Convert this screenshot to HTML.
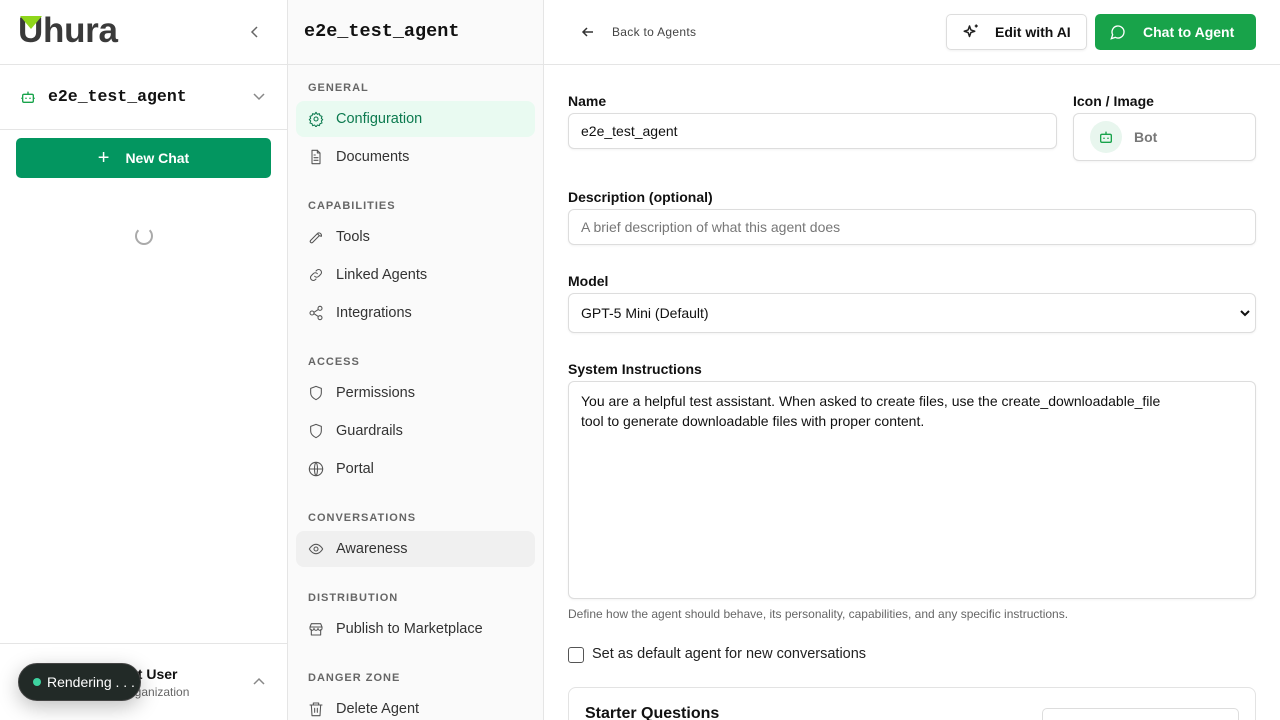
<!DOCTYPE html>
<html><head><meta charset="utf-8"><style>
*{box-sizing:border-box;margin:0;padding:0}
html,body{width:1280px;height:720px;overflow:hidden}
body{font-family:"Liberation Sans",sans-serif;background:#fff;color:#111;position:relative}
.sb{position:absolute;left:0;top:0;width:288px;height:720px;border-right:1px solid #e5e5e5;background:#fff;overflow:hidden}
.mid{position:absolute;left:288px;top:0;width:256px;height:720px;border-right:1px solid #e5e5e5;background:#fafafa;overflow:hidden}
.main{position:absolute;left:544px;top:0;width:736px;height:720px;overflow:hidden}
.hline{position:absolute;left:0;right:0;height:1px;background:#e5e5e5}
.sec{position:absolute;left:20px;font-size:11px;font-weight:bold;letter-spacing:1px;color:#666;margin-top:1px}
.item{position:absolute;left:8px;width:239px;height:36px;border-radius:8px;display:flex;align-items:center;padding-left:12px;font-size:14.5px;color:#333}
.item svg{width:16px;height:16px;margin-right:12px;fill:none;stroke:#555;stroke-width:1.6;stroke-linecap:round;stroke-linejoin:round}
.lbl{position:absolute;font-size:14px;font-weight:bold;color:#111}
.inp{position:absolute;border:1px solid #ddd;border-radius:6px;background:#fff;box-shadow:0 1px 2px rgba(0,0,0,.05);font-size:14px;display:flex;align-items:center;padding-left:12px}
</style></head><body>
<div class="sb">
  <div style="position:absolute;left:18px;top:14px;font-size:35px;font-weight:bold;color:#3a3a3a;letter-spacing:-0.3px;line-height:34px">U<span>hura</span></div>
  <div style="position:absolute;left:20px;top:16px;width:22px;height:13px;background:#8fd61b;clip-path:polygon(0 0,100% 0,50% 100%)"></div>
  <svg style="position:absolute;left:249px;top:25px" width="12" height="14" viewBox="0 0 12 14"><path d="M8 2L3 7l5 5" stroke="#666" stroke-width="1.5" fill="none"/></svg>
  <div class="hline" style="top:64px"></div>
  <svg style="position:absolute;left:20px;top:89px" width="16" height="16" viewBox="0 0 24 24" fill="none" stroke="#17a34a" stroke-width="2"><rect x="4" y="8" width="16" height="12" rx="2"/><path d="M12 8V4M9 13v2M15 13v2M2 14h2M20 14h2"/></svg>
  <div style="position:absolute;left:48px;top:87px;font-family:'Liberation Mono',monospace;font-weight:bold;font-size:16.5px">e2e_test_agent</div>
  <svg style="position:absolute;left:252px;top:91px" width="14" height="12" viewBox="0 0 14 12"><path d="M2 3l5 5 5-5" stroke="#888" stroke-width="1.5" fill="none"/></svg>
  <div class="hline" style="top:129px"></div>
  <div style="position:absolute;left:16px;top:138px;width:255px;height:40px;background:#039660;border-radius:5px;color:#fff;font-size:14px;font-weight:bold;display:flex;align-items:center;justify-content:center"><span style="font-size:20px;font-weight:normal;margin-right:16px">+</span>New Chat</div>
  <div style="position:absolute;left:135px;top:227px;width:18px;height:18px;border:2px solid #aaa;border-top-color:transparent;border-radius:50%"></div>
  <div class="hline" style="top:643px"></div>
  <div style="position:absolute;left:130px;top:666px;font-size:14px;font-weight:bold">st User</div>
  <div style="position:absolute;left:124px;top:685px;font-size:12px;color:#666">organization</div>
  <svg style="position:absolute;left:252px;top:676px" width="14" height="12" viewBox="0 0 14 12"><path d="M2 8l5-5 5 5" stroke="#888" stroke-width="1.5" fill="none"/></svg>
  <div style="position:absolute;left:18px;top:663px;width:123px;height:38px;border-radius:19px;background:#222a27;border:1px solid #444;box-shadow:0 6px 20px rgba(0,0,0,.25);color:#fff;font-size:14px;display:flex;align-items:center;padding-left:14px;white-space:nowrap;overflow:hidden"><span style="width:8px;height:8px;border-radius:50%;background:#3ed3a0;margin-right:6px;flex:none"></span>Rendering . . .</div>
</div>
<div class="mid">
  <div style="position:absolute;left:16px;top:21px;font-family:'Liberation Mono',monospace;font-weight:bold;font-size:18.5px">e2e_test_agent</div>
  <div class="hline" style="top:64px"></div>
  <div class="sec" style="top:81px">GENERAL</div>
  <div class="item" style="top:101px;background:#e9faf1;color:#0c7a4f"><svg viewBox="0 0 24 24" style="stroke:#0c7a4f"><circle cx="12" cy="12" r="3"/><path d="M12 2l2 3 3-1 1 3 3 1-1 3 2 2-2 2 1 3-3 1-1 3-3-1-2 3-2-3-3 1-1-3-3-1 1-3-2-2 2-2-1-3 3-1 1-3 3 1z"/></svg>Configuration</div>
  <div class="item" style="top:139px"><svg viewBox="0 0 24 24"><path d="M14 2H6v20h12V6z"/><path d="M14 2v4h4M9 13h6M9 17h6M9 9h2"/></svg>Documents</div>
  <div class="sec" style="top:199px">CAPABILITIES</div>
  <div class="item" style="top:219px"><svg viewBox="0 0 24 24"><path d="M15 6a4 4 0 0 1 5 5l-3-1-2-2zM14 7L4 17a2 2 0 0 0 3 3l10-10"/></svg>Tools</div>
  <div class="item" style="top:257px"><svg viewBox="0 0 24 24"><path d="M10 14a4 4 0 0 0 6 0l3-3a4 4 0 0 0-6-6l-1 1M14 10a4 4 0 0 0-6 0l-3 3a4 4 0 0 0 6 6l1-1"/></svg>Linked Agents</div>
  <div class="item" style="top:295px"><svg viewBox="0 0 24 24"><circle cx="18" cy="5" r="3"/><circle cx="6" cy="12" r="3"/><circle cx="18" cy="19" r="3"/><path d="M9 11l6-4M9 13l6 4"/></svg>Integrations</div>
  <div class="sec" style="top:355px">ACCESS</div>
  <div class="item" style="top:375px"><svg viewBox="0 0 24 24"><path d="M12 2l8 3v7c0 5-4 8-8 10-4-2-8-5-8-10V5z"/></svg>Permissions</div>
  <div class="item" style="top:413px"><svg viewBox="0 0 24 24"><path d="M12 2l8 3v7c0 5-4 8-8 10-4-2-8-5-8-10V5z"/></svg>Guardrails</div>
  <div class="item" style="top:451px"><svg viewBox="0 0 24 24"><circle cx="12" cy="12" r="10"/><path d="M2 12h20M12 2c3 3 3 17 0 20M12 2c-3 3-3 17 0 20"/></svg>Portal</div>
  <div class="sec" style="top:511px">CONVERSATIONS</div>
  <div class="item" style="top:531px;background:#f0f0f0"><svg viewBox="0 0 24 24"><path d="M2 12s4-7 10-7 10 7 10 7-4 7-10 7S2 12 2 12z"/><circle cx="12" cy="12" r="3"/></svg>Awareness</div>
  <div class="sec" style="top:591px">DISTRIBUTION</div>
  <div class="item" style="top:611px"><svg viewBox="0 0 24 24"><path d="M3 9l2-5h14l2 5M3 9h18v2a3 3 0 0 1-6 0 3 3 0 0 1-6 0 3 3 0 0 1-6 0zM5 13v8h14v-8"/></svg>Publish to Marketplace</div>
  <div class="sec" style="top:671px">DANGER ZONE</div>
  <div class="item" style="top:691px"><svg viewBox="0 0 24 24"><path d="M3 6h18M8 6V3h8v3M5 6l1 16h12l1-16M10 11v6M14 11v6"/></svg>Delete Agent</div>
</div>
<div class="main">
  <svg style="position:absolute;left:37px;top:25px" width="14" height="14" viewBox="0 0 14 14"><path d="M12 7H2M6 3L2 7l4 4" stroke="#333" stroke-width="1.5" fill="none"/></svg>
  <div style="position:absolute;left:68px;top:25px;font-size:12px;color:#444;letter-spacing:0.3px">Back to Agents</div>
  <div style="position:absolute;left:402px;top:14px;width:141px;height:36px;border:1px solid #ddd;border-radius:5px;box-shadow:0 1px 2px rgba(0,0,0,.06);font-size:14px;font-weight:bold;display:flex;align-items:center;padding-left:48px">Edit with AI</div>
  <svg style="position:absolute;left:418px;top:23px" width="18" height="18" viewBox="0 0 24 24" fill="none" stroke="#222" stroke-width="2" stroke-linejoin="round"><path d="M10 4l1.8 5.2L17 11l-5.2 1.8L10 18l-1.8-5.2L3 11l5.2-1.8z"/><path d="M19 2v4M17 4h4"/></svg>
  <div style="position:absolute;left:551px;top:14px;width:161px;height:36px;background:#18a34a;border-radius:5px;color:#fff;font-size:14px;font-weight:bold;display:flex;align-items:center;padding-left:48px">Chat to Agent</div>
  <svg style="position:absolute;left:566px;top:24px" width="16" height="16" viewBox="0 0 24 24" fill="none" stroke="#fff" stroke-width="2"><path d="M7.9 20A9 9 0 1 0 4 16.1L2 22z"/></svg>
  <div class="hline" style="top:64px"></div>
  <div class="lbl" style="left:24px;top:93px">Name</div>
  <div class="inp" style="left:24px;top:113px;width:489px;height:36px">e2e_test_agent</div>
  <div class="lbl" style="left:529px;top:93px">Icon / Image</div>
  <div class="inp" style="left:529px;top:113px;width:183px;height:48px;padding-left:16px;color:#777;font-weight:bold"><span style="width:32px;height:32px;border-radius:50%;background:#e8f6ee;display:inline-flex;align-items:center;justify-content:center;margin-right:12px"><svg width="16" height="16" viewBox="0 0 24 24" fill="none" stroke="#17a34a" stroke-width="2"><rect x="4" y="8" width="16" height="12" rx="2"/><path d="M12 8V4M9 13v2M15 13v2"/></svg></span>Bot</div>
  <div class="lbl" style="left:24px;top:189px">Description (optional)</div>
  <div class="inp" style="left:24px;top:209px;width:688px;height:36px;color:#777">A brief description of what this agent does</div>
  <div class="lbl" style="left:24px;top:273px">Model</div>
  <div class="inp" style="left:24px;top:293px;width:688px;height:40px">GPT-5 Mini (Default)<svg style="position:absolute;right:4px;top:14px" width="12" height="10" viewBox="0 0 12 10"><path d="M2 3l4 4 4-4" stroke="#111" stroke-width="2" fill="none"/></svg></div>
  <div class="lbl" style="left:24px;top:361px">System Instructions</div>
  <div class="inp" style="left:24px;top:381px;width:688px;height:218px;display:block;padding-top:9px;line-height:20px;padding-right:12px;white-space:nowrap">You are a helpful test assistant. When asked to create files, use the create_downloadable_file<br>tool to generate downloadable files with proper content.</div>
  <div style="position:absolute;left:24px;top:607px;font-size:12px;color:#666">Define how the agent should behave, its personality, capabilities, and any specific instructions.</div>
  <div style="position:absolute;left:24px;top:647px;width:16px;height:16px;border:1px solid #555;border-radius:3px"></div>
  <div style="position:absolute;left:48px;top:646px;font-size:14.5px;color:#222">Set as default agent for new conversations</div>
  <div style="position:absolute;left:24px;top:687px;width:688px;height:60px;border:1px solid #e3e3e3;border-radius:8px"></div>
  <div style="position:absolute;left:41px;top:705px;font-size:16px;font-weight:bold">Starter Questions</div>
  <div style="position:absolute;left:498px;top:708px;width:197px;height:30px;border:1px solid #ddd;border-radius:5px"></div>
</div>
</body></html>
